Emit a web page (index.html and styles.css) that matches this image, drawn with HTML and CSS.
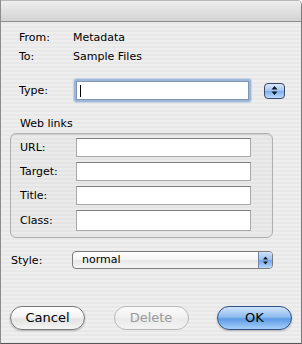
FILE: index.html
```html
<!DOCTYPE html>
<html>
<head>
<meta charset="utf-8">
<link rel="stylesheet" href="styles.css">
</head>
<body>
<div class="window">
  <div class="titlebar"></div>
  <div class="content">
    <div class="info">
      <div class="row"><span class="lbl">From:</span><span class="val">Metadata</span></div>
      <div class="row"><span class="lbl">To:</span><span class="val">Sample Files</span></div>
    </div>
    <div class="type-row">
      <span class="lbl">Type:</span>
      <div class="focus"><div class="field"><span class="caret"></span></div></div>
      <div class="stepper">
        <svg width="9" height="11" viewBox="0 0 9 11"><path d="M4.5 1 L7.5 4.5 L1.5 4.5 Z M4.5 10 L7.5 6.5 L1.5 6.5 Z" fill="#101828"/></svg>
      </div>
    </div>
    <div class="group-title">Web links</div>
    <div class="group">
      <div class="grow"><span class="lbl">URL:</span><div class="field"></div></div>
      <div class="grow"><span class="lbl">Target:</span><div class="field"></div></div>
      <div class="grow"><span class="lbl">Title:</span><div class="field"></div></div>
      <div class="grow"><span class="lbl">Class:</span><div class="field"></div></div>
    </div>
    <div class="style-row">
      <span class="lbl">Style:</span>
      <div class="popup">
        <span class="ptext">normal</span>
        <span class="parrows"><svg width="7" height="11" viewBox="0 0 7 11"><path d="M3.5 1.5 L6 4.5 L1 4.5 Z M3.5 9.5 L6 6.5 L1 6.5 Z" fill="#1a1a1a"/></svg></span>
      </div>
    </div>
    <div class="buttons">
      <div class="btn">Cancel</div>
      <div class="btn disabled">Delete</div>
      <div class="btn default">OK</div>
    </div>
  </div>
</div>
</body>
</html>
```
FILE: styles.css
```css
* { box-sizing: border-box; }
html, body { margin: 0; padding: 0; }
body {
  width: 302px; height: 344px; overflow: hidden;
  font-family: "DejaVu Sans", "Lucida Grande", sans-serif;
  font-size: 11px; color: #000;
  background: #fff;
}
.window {
  width: 302px; height: 344px;
  border-left: 1px solid #8c8c8c;
  border-right: 1px solid #7a7a7a;
  border-bottom: 1px solid #555;
  border-top-right-radius: 5px;
  overflow: hidden;
  display: flex; flex-direction: column;
  background-color: #ededed;
  background-image: repeating-linear-gradient(to bottom, #eeeeee 0, #eeeeee 2px, #e8e8e8 2px, #e8e8e8 4px);
}
.titlebar {
  height: 22px; flex: none;
  background: linear-gradient(to bottom, #eeeeee 0%, #e3e3e3 40%, #d3d3d3 100%);
  border-bottom: 1px solid #8e8e8e;
  border-top: 1px solid #b8b8b8;
}
.content { flex: 1; display: flex; flex-direction: column; padding: 6px 0 0 0; }
.info { display: flex; flex-direction: column; }
.row { display: flex; height: 19px; line-height: 19px; }
.row .lbl { width: 72px; padding-left: 18px; }
.type-row { display: flex; align-items: center; margin-top: 13px; height: 23px; }
.type-row .lbl { width: 73px; padding-left: 18px; }
.focus {
  width: 177px; height: 23px; padding: 2px;
  border-radius: 3px;
  background: #9fb6d6;
  box-shadow: 0 0 1px 1px #c4d3e8;
}
.focus .field { width: 100%; height: 100%; border: 1px solid #7f95b8; position: relative; }
.caret { position: absolute; left: 3px; top: 3px; width: 1px; height: 12px; background: #000; }
.field { background: #fff; border: 1px solid #a8a8a8; border-top-color: #7d7d7d; }
.stepper {
  margin-left: 13px; width: 21px; height: 16px; border-radius: 4px;
  border: 1px solid #3a4a66;
  background: linear-gradient(to bottom, #d9e8fb 0%, #a9c9f2 45%, #7fb0ec 55%, #bcdaff 100%);
  display: flex; align-items: center; justify-content: center;
}
.group-title { margin-top: 15px; padding-left: 19px; height: 14px; line-height: 14px; }
.group {
  margin: 2px 0 0 9px; width: 263px; height: 105px;
  border: 1px solid #aeaeae; border-radius: 6px;
  background: rgba(0,0,0,0.015);
  box-shadow: inset 0 1px 1px rgba(0,0,0,0.08);
  padding: 4px 0 0 0;
  display: flex; flex-direction: column; gap: 5px;
}
.grow { display: flex; align-items: center; height: 19px; }
.grow .lbl { width: 65px; padding-left: 9px; }
.grow .field { width: 175px; height: 19px; }
.grow:last-child { height: 21px; }
.grow:last-child .field { height: 21px; }
.style-row { display: flex; align-items: center; margin-top: 13px; height: 18px; }
.style-row .lbl { width: 71px; padding-left: 10px; }
.popup {
  width: 201px; height: 18px; display: flex; align-items: stretch;
  border: 1px solid #7b7b7b; border-radius: 4px; overflow: hidden;
  background: linear-gradient(to bottom, #ffffff 0%, #f3f3f3 50%, #e6e6e6 51%, #f6f6f6 100%);
}
.ptext { flex: 1; padding-left: 9px; line-height: 16px; }
.parrows {
  width: 14px; display: flex; align-items: center; justify-content: center;
  border-left: 1px solid #6f86a9;
  background: linear-gradient(to bottom, #cfe2fb 0%, #9cc0ef 48%, #74a6e8 52%, #b9d7fb 100%);
}
.buttons { display: flex; justify-content: space-between; padding: 0 9px 0 9px; margin-top: 37px; }
.btn {
  width: 75px; height: 24px; border-radius: 12px;
  border: 1px solid #777;
  background: linear-gradient(to bottom, #ffffff 0%, #f4f4f4 45%, #e2e2e2 55%, #f5f5f5 100%);
  box-shadow: 0 1px 2px rgba(0,0,0,0.25);
  font-size: 13px; line-height: 22px; text-align: center;
}
.btn.disabled { color: #9a9a9a; border-color: #b8b8b8; box-shadow: none; background: linear-gradient(to bottom, #fafafa 0%, #f0f0f0 50%, #e9e9e9 51%, #f3f3f3 100%); }
.btn.default {
  border-color: #2f4f80;
  background: linear-gradient(to bottom, #cfe3fb 0%, #8fbcef 45%, #5d9be6 55%, #a6d0fb 100%);
}
```
